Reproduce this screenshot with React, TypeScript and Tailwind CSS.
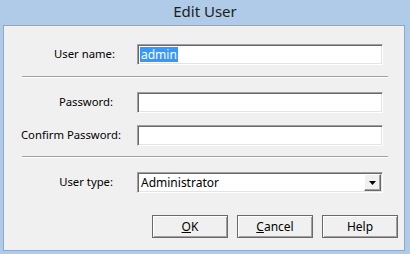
import React from "react";

const sunken =
  "border-t-[#a0a0a0] border-l-[#a0a0a0] border-b-white border-r-white border shadow-[inset_1px_1px_0_#696969,inset_-1px_-1px_0_#e3e3e3]";

function Field({ children }: { children?: React.ReactNode }) {
  return (
    <div className={`w-[246px] h-[21px] bg-white ${sunken} flex items-center px-[2px]`}>
      {children}
    </div>
  );
}

function Row({ label, pr, children }: { label: string; pr: string; children: React.ReactNode }) {
  return (
    <div className="flex items-center h-[21px]">
      <div className={`w-[133px] text-right ${pr} whitespace-nowrap`}>{label}</div>
      {children}
    </div>
  );
}

function Sep() {
  return <div className="ml-[18px] w-[366px] h-[2px] border-t border-t-[#a0a0a0] border-b border-b-white" />;
}

function Btn({ children }: { children: React.ReactNode }) {
  return (
    <div className="w-[76px] h-[23px] border border-[#696969] bg-[#f0f0f0] shadow-[inset_1px_1px_0_#ffffff,inset_-1px_-1px_0_#a0a0a0] flex items-center justify-center">
      {children}
    </div>
  );
}

export default function App() {
  return (
    <div
      className="w-[410px] h-[254px] bg-[#afcbe8] flex flex-col text-[11.3px] text-[#000]"
      style={{ fontFamily: '"Noto Sans", "Open Sans", sans-serif' }}
    >
      <div className="h-[25px] flex items-center justify-center text-[15px] text-[#1e1e1e] pb-[2px]">
        Edit User
      </div>
      <div className="ml-[3px] mr-[5px] mb-[3px] flex-1 bg-[#f0f0f0] border border-[#8fa9c9] flex flex-col pt-[18px]">
        <Row label="User name:" pr="pr-[22px]">
          <Field>
            <span className="bg-[#3399ff] text-white leading-[15px] px-[1px] text-[12px]">admin</span>
          </Field>
        </Row>
        <div className="mt-[11px]">
          <Sep />
        </div>
        <div className="mt-[14px]">
          <Row label="Password:" pr="pr-[24px]">
            <Field />
          </Row>
        </div>
        <div className="mt-[12px]">
          <Row label="Confirm Password:" pr="pr-[16px]">
            <Field />
          </Row>
        </div>
        <div className="mt-[10px]">
          <Sep />
        </div>
        <div className="mt-[14px]">
          <Row label="User type:" pr="pr-[24px]">
            <div className={`w-[246px] h-[21px] bg-white ${sunken} flex items-center pl-[3px] pr-[1px]`}>
              <span className="flex-1 text-[12px]">Administrator</span>
              <div className="w-[17px] h-[17px] bg-[#f0f0f0] border border-t-white border-l-white border-b-[#696969] border-r-[#696969] shadow-[inset_-1px_-1px_0_#a0a0a0] flex items-center justify-center">
                <svg width="7" height="4" viewBox="0 0 7 4">
                  <path d="M0 0H7L3.5 4Z" fill="#000" />
                </svg>
              </div>
            </div>
          </Row>
        </div>
        <div className="mt-[22px] flex justify-end gap-[9px] pr-[6px] text-[12px]">
          <Btn>
            <span>
              <span className="underline">O</span>K
            </span>
          </Btn>
          <Btn>
            <span>
              <span className="underline">C</span>ancel
            </span>
          </Btn>
          <Btn>Help</Btn>
        </div>
      </div>
    </div>
  );
}
